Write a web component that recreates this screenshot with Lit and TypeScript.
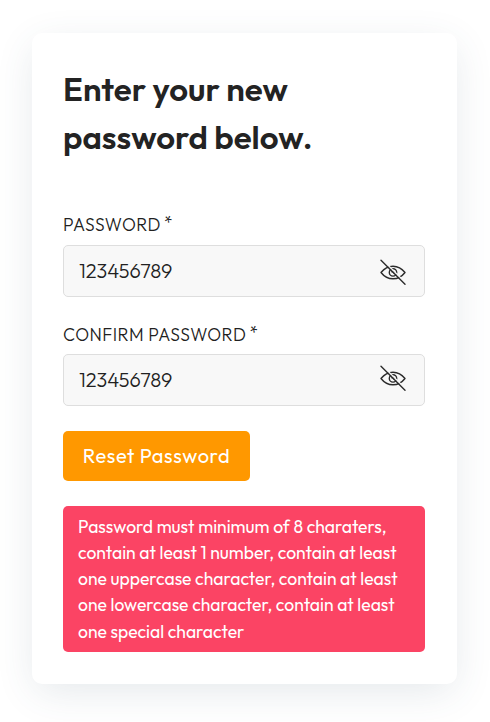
import { LitElement, html, css } from "lit";
import { customElement, property } from "lit/decorators.js";

@customElement("password-field")
class PasswordField extends LitElement {
  @property() label = "";
  @property() value = "";

  static styles = css`
    :host { display: block; }
    .label { display: flex; height: 20px; line-height: 20px; font-size: 17.5px; font-weight: 300; color: #212121; white-space: nowrap; }
    .star { margin-left: 3px; position: relative; top: -2px; }
    .text { letter-spacing: 0.5px; }
    .box { box-sizing: border-box; display: flex; align-items: center; height: 52px; margin-top: var(--box-gap, 10px);
      padding: 0 18px 0 15px; border: 1px solid #dedede; border-radius: 5px; background: #f8f8f8; }
    input { flex: 1; min-width: 0; padding: 0; border: 0; outline: 0; background: transparent; color: #212121;
      font: 350 20px/28px Outfit, Lato, sans-serif; }
    svg { display: block; width: 26px; height: 26px; margin-top: var(--eye-shift, 2px); }
  `;

  render() {
    return html`
      <label class="label"><span class="text">${this.label}</span><span class="star">*</span></label>
      <div class="box">
        <input .value=${this.value} aria-label=${this.label} />
        <svg viewBox="0 0 26 26" fill="none" stroke="#2b2b2b" stroke-width="1.4" stroke-linecap="round">
          <path d="M1 13.5C4.2 9.4 8.3 7.2 13 7.2S21.8 9.4 25 13.5C21.8 17.6 17.7 19.8 13 19.8S4.2 17.6 1 13.5Z" stroke-linejoin="round" />
          <circle cx="13" cy="13.4" r="3.7" />
          <path d="M12 12.8a1.3 1.3 0 0 1 2 1.2" />
          <path d="M3 1.2L26 24.2" stroke="#f8f8f8" stroke-width="1.4" />
          <path d="M1 1.3L25 25.3" />
        </svg>
      </div>
    `;
  }
}

@customElement("app-root")
class AppRoot extends LitElement {
  static styles = css`
    :host { display: block; box-sizing: border-box; height: 722px; padding: 33px 33px 0 32px; overflow: hidden;
      background: #fff; font-family: Outfit, Lato, sans-serif; color: #212121; }
    .card { box-sizing: border-box; height: 651px; padding: 32px 32px 0 31px; border-radius: 10px; background: #fff;
      box-shadow: 0 10px 40px -4px rgba(60, 85, 105, 0.14); }
    h1 { margin: 0; font-size: 33px; line-height: 48px; font-weight: 600; letter-spacing: 0.03px; color: #232323; }
    .line { display: block; width: max-content; white-space: nowrap; }
    .first { margin-top: 54px; }
    .second { margin-top: 28px; --box-gap: 9px; --eye-shift: -4px; }
    button { display: block; width: 187px; height: 50px; margin: 25px 0 0; padding: 0; border: 0; border-radius: 5px;
      background: #ff9800; color: #fff; font: 430 20px/50px Outfit, Lato, sans-serif; letter-spacing: 0.6px; }
    .alert { box-sizing: border-box; height: 146px; margin-top: 25px; padding: 7.6px 15px; border-radius: 5px;
      background: #fb4464; color: #fff; font-size: 17.5px; line-height: 26.25px; }
  `;

  render() {
    return html`
      <main class="card">
        <h1><span class="line">Enter your new</span><span class="line">password below.</span></h1>
        <password-field class="first" label="PASSWORD" value="123456789"></password-field>
        <password-field class="second" label="CONFIRM PASSWORD" value="123456789"></password-field>
        <button>Reset Password</button>
        <div class="alert" role="alert">
          <span class="line">Password must minimum of 8 charaters,</span>
          <span class="line">contain at least 1 number, contain at least</span>
          <span class="line">one uppercase character, contain at least</span>
          <span class="line">one lowercase character, contain at least</span>
          <span class="line">one special character</span>
        </div>
      </main>
    `;
  }
}
